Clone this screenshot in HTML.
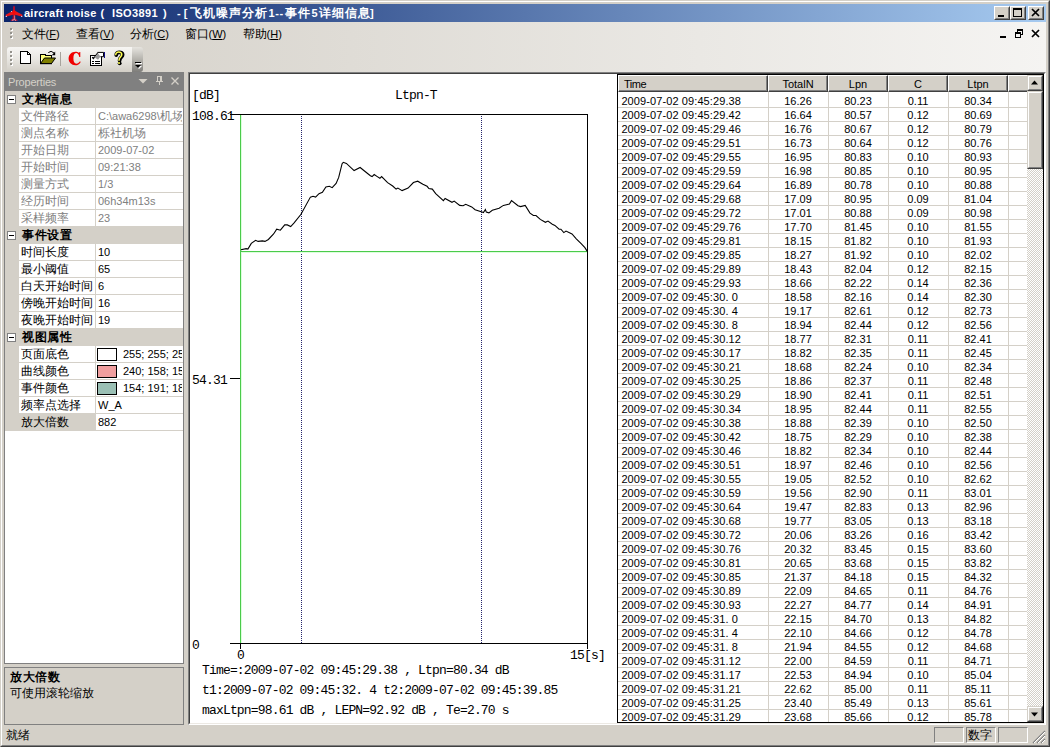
<!DOCTYPE html>
<html><head><meta charset="utf-8"><title>aircraft noise</title>
<style>
html,body{margin:0;padding:0;}
body{width:1050px;height:747px;overflow:hidden;background:#d4d0c8;position:relative;font-family:"Liberation Sans",sans-serif;font-size:11px;color:#000;}
.a{position:absolute;white-space:nowrap;overflow:hidden;}
.t{position:absolute;white-space:nowrap;line-height:14px;height:14px;}
.cj{font-size:12px;}
.j{display:inline-block;text-align:justify;text-align-last:justify;text-justify:inter-character;white-space:nowrap;letter-spacing:0;}
.mono{font-family:"Liberation Mono",monospace;font-size:13px;letter-spacing:-0.83px;position:absolute;white-space:nowrap;line-height:14px;height:14px;}
.row{position:absolute;left:618px;width:409px;height:14px;line-height:14px;white-space:nowrap;font-size:11px;}
.row span{position:absolute;top:0;height:14px;text-align:center;width:60px;}
.row span.tm{left:3.400px;width:146px;text-align:left;letter-spacing:0.1px;}
.pr{position:absolute;left:5px;width:178px;height:17px;}
.pr .n{position:absolute;left:16px;top:0;width:73px;height:16px;line-height:16px;font-size:12px;overflow:hidden;white-space:nowrap;}
.pr .v{position:absolute;left:92px;top:0;width:85px;height:16px;line-height:16px;font-size:11px;overflow:hidden;white-space:nowrap;}
.cat{position:absolute;left:5px;width:178px;height:17px;background:#d4d0c8;}
.cat b{position:absolute;left:17px;top:0;line-height:16px;font-size:12px;}
.pm{position:absolute;left:2px;top:4px;width:7px;height:7px;border:1px solid #808080;background:#fff;}
.pm i{position:absolute;left:1px;top:3px;width:5px;height:1px;background:#000;}
.hd{position:absolute;top:75px;height:17px;box-sizing:border-box;background:#d4d0c8;border-left:1px solid #fff;border-top:1px solid #fff;border-right:1px solid #404040;border-bottom:1px solid #404040;}
.hd i{position:absolute;left:0;top:0;right:0;bottom:0;border-right:1px solid #808080;border-bottom:1px solid #808080;}
.hd span{position:absolute;left:0;right:0;top:1px;line-height:14px;text-align:center;font-size:11px;}
.sp{position:absolute;box-sizing:border-box;border:1px solid;border-color:#808080 #fff #fff #808080;}
.btn{position:absolute;box-sizing:border-box;background:#d4d0c8;border:1px solid;border-color:#fff #404040 #404040 #fff;}
.sb{position:absolute;box-sizing:border-box;background:#d4d0c8;border:1px solid;border-color:#d4d0c8 #404040 #404040 #d4d0c8;}
.sb i{position:absolute;left:0;top:0;right:0;bottom:0;border:1px solid;border-color:#fff #808080 #808080 #fff;}
.btn i{position:absolute;left:0;top:0;right:0;bottom:0;border:1px solid;border-color:#d4d0c8 #808080 #808080 #d4d0c8;}
</style></head><body>

<div class="a" style="left:0;top:0;width:1050px;height:747px;box-sizing:border-box;border:1px solid;border-color:#d4d0c8 #404040 #404040 #d4d0c8;"></div>
<div class="a" style="left:1px;top:1px;width:1048px;height:745px;box-sizing:border-box;border:1px solid;border-color:#fff #808080 #808080 #fff;"></div>
<div class="a" style="left:4px;top:4px;width:1042px;height:18px;background:linear-gradient(to right,#0a246a,#a6caf0);"></div>
<svg class="a" style="left:5px;top:5px" width="18" height="17" viewBox="5 5 18 17"><path d="M13 7Q14 4.500 15 7L15.400 19.500H12.600Z" fill="#a81030"/><path d="M14 10.300L22.400 14.800V16.800L14 14.600L5.700 16.800V14.800Z" fill="#ea1418"/><path d="M14 10.600V14.500" stroke="#f80808" stroke-width="2.400"/><path d="M14 17.800L17.400 20V21.100L14 20.400L10.800 21.100V20Z" fill="#b81838"/><path d="M12 20.300L14.500 19.600L16 20.600" stroke="#f4b8c8" stroke-width="0.800" fill="none"/><path d="M14.600 15.500V19" stroke="#d8a0b8" stroke-width="0.700"/><circle cx="6.300" cy="16.400" r="0.650" fill="#dcdcff"/><circle cx="21.700" cy="16.400" r="0.650" fill="#dcdcff"/><circle cx="11.500" cy="11.500" r="0.600" fill="#f0d0e0"/></svg>
<div class="t" style="left:24px;top:6px;color:#fff;font-weight:bold;font-size:11px;letter-spacing:0.25px;">aircraft noise</div>
<div class="t" style="left:100.5px;top:6px;color:#fff;font-weight:bold;font-size:11px;letter-spacing:0px;">(</div>
<div class="t" style="left:112px;top:6px;color:#fff;font-weight:bold;font-size:11px;letter-spacing:0.35px;">ISO3891</div>
<div class="t" style="left:163px;top:6px;color:#fff;font-weight:bold;font-size:11px;letter-spacing:0px;">)</div>
<div class="t" style="left:177px;top:6px;color:#fff;font-weight:bold;font-size:11px;letter-spacing:0px;">- [</div>
<div class="t" style="left:190px;top:6px;color:#fff;font-weight:bold;font-size:11px;letter-spacing:0px;"><span class="cj j" style="width:77px;">飞机噪声分析</span></div>
<div class="t" style="left:268.5px;top:6px;color:#fff;font-weight:bold;font-size:11px;letter-spacing:0.6px;">1--</div>
<div class="t" style="left:285px;top:6px;color:#fff;font-weight:bold;font-size:11px;letter-spacing:0px;"><span class="cj j" style="width:25px;">事件</span></div>
<div class="t" style="left:311.5px;top:6px;color:#fff;font-weight:bold;font-size:11px;letter-spacing:0px;">5</div>
<div class="t" style="left:318.5px;top:6px;color:#fff;font-weight:bold;font-size:11px;letter-spacing:0px;"><span class="cj j" style="width:51px;">详细信息</span></div>
<div class="t" style="left:370px;top:6px;color:#fff;font-weight:bold;font-size:11px;letter-spacing:0px;">]</div>
<div class="btn" style="left:994px;top:6px;width:16px;height:14px;"><i></i></div>
<div class="btn" style="left:1010px;top:6px;width:16px;height:14px;"><i></i></div>
<div class="btn" style="left:1028px;top:6px;width:16px;height:14px;"><i></i></div>
<div class="a" style="left:998px;top:15px;width:6px;height:2px;background:#000;"></div>
<div class="a" style="left:1013px;top:8px;width:9px;height:9px;box-sizing:border-box;border:1px solid #000;border-top-width:2px;"></div>
<svg class="a" style="left:1031px;top:8px" width="10" height="9" viewBox="0 0 10 9"><path d="M1 1l7 7M8 1l-7 7" stroke="#000" stroke-width="1.7" fill="none"/></svg>
<div class="a" style="left:4px;top:22px;width:1042px;height:50px;background:linear-gradient(to right,#d4d0c8,#f5f4f2);"></div>
<div class="a" style="left:11px;top:29px;width:2px;height:2px;background:#fff;"></div><div class="a" style="left:10px;top:28px;width:2px;height:2px;background:#94928c;"></div>
<div class="a" style="left:11px;top:33px;width:2px;height:2px;background:#fff;"></div><div class="a" style="left:10px;top:32px;width:2px;height:2px;background:#94928c;"></div>
<div class="a" style="left:11px;top:37px;width:2px;height:2px;background:#fff;"></div><div class="a" style="left:10px;top:36px;width:2px;height:2px;background:#94928c;"></div>
<div class="t" style="left:21.5px;top:27px;font-size:11px;"><span class="cj j" style="width:24px;">文件</span>(<u>F</u>)</div>
<div class="t" style="left:75.5px;top:27px;font-size:11px;"><span class="cj j" style="width:24px;">查看</span>(<u>V</u>)</div>
<div class="t" style="left:129.5px;top:27px;font-size:11px;"><span class="cj j" style="width:24px;">分析</span>(<u>C</u>)</div>
<div class="t" style="left:184.5px;top:27px;font-size:11px;"><span class="cj j" style="width:24px;">窗口</span>(<u>W</u>)</div>
<div class="t" style="left:242.5px;top:27px;font-size:11px;"><span class="cj j" style="width:24px;">帮助</span>(<u>H</u>)</div>
<div class="a" style="left:1000px;top:36px;width:6px;height:2px;background:#000;"></div>
<div class="a" style="left:1017px;top:29px;width:6px;height:6px;box-sizing:border-box;border:1px solid #000;border-top-width:2px;"></div>
<div class="a" style="left:1015px;top:32px;width:6px;height:6px;box-sizing:border-box;border:1px solid #000;border-top-width:2px;background:#f4f3f1;"></div>
<svg class="a" style="left:1031px;top:29px" width="10" height="9" viewBox="0 0 10 9"><path d="M1 1l7 7M8 1l-7 7" stroke="#000" stroke-width="1.7" fill="none"/></svg>
<div class="a" style="left:7px;top:47px;width:125px;height:25px;border-radius:3px 0 0 3px;background:linear-gradient(to bottom,#f7f6f4,#e8e6e1 50%,#d2cec6);"></div>
<div class="a" style="left:132px;top:47px;width:11px;height:25px;border-radius:0 3px 3px 0;background:linear-gradient(to bottom,#e6e4df,#b4b2ac 50%,#7e7d7a);"></div>
<div class="a" style="left:11px;top:52px;width:2px;height:2px;background:#fff;"></div><div class="a" style="left:10px;top:51px;width:2px;height:2px;background:#94928c;"></div>
<div class="a" style="left:11px;top:56px;width:2px;height:2px;background:#fff;"></div><div class="a" style="left:10px;top:55px;width:2px;height:2px;background:#94928c;"></div>
<div class="a" style="left:11px;top:60px;width:2px;height:2px;background:#fff;"></div><div class="a" style="left:10px;top:59px;width:2px;height:2px;background:#94928c;"></div>
<div class="a" style="left:11px;top:64px;width:2px;height:2px;background:#fff;"></div><div class="a" style="left:10px;top:63px;width:2px;height:2px;background:#94928c;"></div>
<svg class="a" style="left:14px;top:47px" width="130" height="25" viewBox="14 47 130 25">
<g shape-rendering="crispEdges">
<path d="M20.500 51.500H27.500L30.500 54.500V63.500H20.500Z" fill="#fff" stroke="#000" stroke-width="1"/>
<path d="M27.500 51.500V54.500H30.500" fill="none" stroke="#000" stroke-width="1"/>
<path d="M20 63.500H31" stroke="#000" stroke-width="1"/>
</g>
<g>
<path d="M40.500 63.500V55L41.500 54H44.500L45.500 55H51.500V57.500" fill="#ffff7a" stroke="#000" stroke-width="1" shape-rendering="crispEdges"/>
<path d="M41 57.500V63" stroke="#ffffc8" stroke-width="1" shape-rendering="crispEdges"/>
<path d="M40.500 63.500L44.500 58H55.500L51.500 63.500Z" fill="#808000" stroke="#000" stroke-width="1"/>
<path d="M40 63.600H52" stroke="#000" stroke-width="1.2"/>
<path d="M48.300 52.600Q51 49.800 54 53" fill="none" stroke="#000" stroke-width="1"/>
<path d="M55.200 51.600V55.200H51.800Z" fill="#000"/>
</g>
<path d="M60.500 52V66" stroke="#a6a39c" stroke-width="1" shape-rendering="crispEdges"/>
<path d="M80.300 52L80.300 56.900L79.300 56.900C78.800 54.500 77.600 53.100 76.100 53.100C74.200 53.100 73.400 55.400 73.400 58.500C73.400 61.900 74.400 63.700 76.400 63.700C77.800 63.700 79 62.900 80 61.300L80.700 61.900C79.500 64.100 77.700 65.300 75.300 65.300C71.500 65.300 68.600 62.500 68.600 58.600C68.600 54.700 71.600 51.800 75.400 51.800C76.800 51.800 77.800 52.200 78.700 52.800C79.200 52.800 79.500 52.500 79.600 52Z" fill="#f00000"/>
<g>
<path d="M90.500 55.500H101.500V65.500H90.500Z" fill="#fff" stroke="#000" stroke-width="1" shape-rendering="crispEdges"/>
<path d="M92 61.500H94M95 61.500H100M92 63.500H94M95 63.500H100" stroke="#000" stroke-width="1" shape-rendering="crispEdges"/>
<path d="M92.300 57.200L93.300 58.400L94.600 57" stroke="#000" stroke-width="1.300" fill="none"/>
<path d="M94.200 57L98 52.300L101.200 55.500L98 59.800Z" fill="#9a9a9a"/>
<path d="M94.600 56.600L98 52.400" stroke="#000" stroke-width="1"/>
<path d="M97.500 52.400H103.500V56.700H100.500" fill="#fff" stroke="#000" stroke-width="1"/>
<path d="M104.500 51.800V57.800" stroke="#101088" stroke-width="1.400" shape-rendering="crispEdges"/>
</g>
<g fill="none" stroke-linecap="round">
<path d="M116.300 55C116 51.600 122.700 51.400 122.600 54.800C122.500 57.200 119.600 57.400 119.600 60.400" stroke="#000" stroke-width="3.800"/>
<circle cx="119.700" cy="63.300" r="1.900" fill="#000" stroke="none"/>
<path d="M115.800 54.600C115.600 51.400 121.800 51.200 121.800 54.500C121.800 57 119 57.200 119 60.200" stroke="#ffff50" stroke-width="1.500"/>
<circle cx="119" cy="63" r="1" fill="#ffff50" stroke="none"/>
</g>
<g shape-rendering="crispEdges">
<path d="M136 63.500H142" stroke="#fff" stroke-width="1"/>
<path d="M135 62.500H141" stroke="#000" stroke-width="1"/>
<path d="M136 66H142L139 69Z" fill="#fff" shape-rendering="auto"/>
<path d="M135 65H141L138 68Z" fill="#000" shape-rendering="auto"/>
</g>
</svg>
<div class="a" style="left:4px;top:72px;width:180px;height:19px;background:#808080;"></div>
<div class="t" style="left:8px;top:75px;color:#d4d0c8;font-size:11px;letter-spacing:-0.2px;">Properties</div>
<svg class="a" style="left:138px;top:74px" width="44" height="14" viewBox="0 0 44 14"><path d="M0.500 5h9l-4.500 4.500z" fill="#d4d0c8"/><path d="M19.5 2.5h4v5h-4zM22.500 2.5v5M18 7.500h7M21.500 8v3" stroke="#d4d0c8" fill="none" shape-rendering="crispEdges"/><path d="M33.500 3.500l7 7M40.500 3.500l-7 7" stroke="#d4d0c8" stroke-width="1.3" fill="none"/></svg>
<div class="a" style="left:4px;top:91px;width:180px;height:573px;box-sizing:border-box;background:#fff;border:1px solid #808080;border-top:none;"></div>
<div class="a" style="left:5px;top:91px;width:14px;height:340px;background:#d4d0c8;"></div>
<div class="cat" style="top:91px;"><div class="pm"><i></i></div><b><span class="cj j" style="width:50px;">文档信息</span></b></div>
<div class="pr" style="top:108px;color:#808080;"><div class="a" style="left:14px;top:0;width:76px;height:16px;"></div><div class="n" style=""><span class="cj j" style="width:48px;">文件路径</span></div><div class="a" style="left:90px;top:0;width:1px;height:17px;background:#d4d0c8;"></div><div class="v"><span style="position:absolute;left:1px;">C:\awa6298\<span class="cj j" style="width:24px;">机场</span></span></div><div class="a" style="left:14px;top:16px;width:164px;height:1px;background:#d4d0c8;"></div></div>
<div class="pr" style="top:125px;color:#808080;"><div class="a" style="left:14px;top:0;width:76px;height:16px;"></div><div class="n" style=""><span class="cj j" style="width:48px;">测点名称</span></div><div class="a" style="left:90px;top:0;width:1px;height:17px;background:#d4d0c8;"></div><div class="v"><span style="position:absolute;left:1px;"><span class="cj j" style="width:48px;">栎社机场</span></span></div><div class="a" style="left:14px;top:16px;width:164px;height:1px;background:#d4d0c8;"></div></div>
<div class="pr" style="top:142px;color:#808080;"><div class="a" style="left:14px;top:0;width:76px;height:16px;"></div><div class="n" style=""><span class="cj j" style="width:48px;">开始日期</span></div><div class="a" style="left:90px;top:0;width:1px;height:17px;background:#d4d0c8;"></div><div class="v"><span style="position:absolute;left:1px;">2009-07-02</span></div><div class="a" style="left:14px;top:16px;width:164px;height:1px;background:#d4d0c8;"></div></div>
<div class="pr" style="top:159px;color:#808080;"><div class="a" style="left:14px;top:0;width:76px;height:16px;"></div><div class="n" style=""><span class="cj j" style="width:48px;">开始时间</span></div><div class="a" style="left:90px;top:0;width:1px;height:17px;background:#d4d0c8;"></div><div class="v"><span style="position:absolute;left:1px;">09:21:38</span></div><div class="a" style="left:14px;top:16px;width:164px;height:1px;background:#d4d0c8;"></div></div>
<div class="pr" style="top:176px;color:#808080;"><div class="a" style="left:14px;top:0;width:76px;height:16px;"></div><div class="n" style=""><span class="cj j" style="width:48px;">测量方式</span></div><div class="a" style="left:90px;top:0;width:1px;height:17px;background:#d4d0c8;"></div><div class="v"><span style="position:absolute;left:1px;">1/3</span></div><div class="a" style="left:14px;top:16px;width:164px;height:1px;background:#d4d0c8;"></div></div>
<div class="pr" style="top:193px;color:#808080;"><div class="a" style="left:14px;top:0;width:76px;height:16px;"></div><div class="n" style=""><span class="cj j" style="width:48px;">经历时间</span></div><div class="a" style="left:90px;top:0;width:1px;height:17px;background:#d4d0c8;"></div><div class="v"><span style="position:absolute;left:1px;">06h34m13s</span></div><div class="a" style="left:14px;top:16px;width:164px;height:1px;background:#d4d0c8;"></div></div>
<div class="pr" style="top:210px;color:#808080;"><div class="a" style="left:14px;top:0;width:76px;height:16px;"></div><div class="n" style=""><span class="cj j" style="width:48px;">采样频率</span></div><div class="a" style="left:90px;top:0;width:1px;height:17px;background:#d4d0c8;"></div><div class="v"><span style="position:absolute;left:1px;">23</span></div><div class="a" style="left:14px;top:16px;width:164px;height:1px;background:#d4d0c8;"></div></div>
<div class="cat" style="top:227px;"><div class="pm"><i></i></div><b><span class="cj j" style="width:50px;">事件设置</span></b></div>
<div class="pr" style="top:244px;color:#000;"><div class="a" style="left:14px;top:0;width:76px;height:16px;"></div><div class="n" style=""><span class="cj j" style="width:48px;">时间长度</span></div><div class="a" style="left:90px;top:0;width:1px;height:17px;background:#d4d0c8;"></div><div class="v"><span style="position:absolute;left:1px;">10</span></div><div class="a" style="left:14px;top:16px;width:164px;height:1px;background:#d4d0c8;"></div></div>
<div class="pr" style="top:261px;color:#000;"><div class="a" style="left:14px;top:0;width:76px;height:16px;"></div><div class="n" style=""><span class="cj j" style="width:48px;">最小阈值</span></div><div class="a" style="left:90px;top:0;width:1px;height:17px;background:#d4d0c8;"></div><div class="v"><span style="position:absolute;left:1px;">65</span></div><div class="a" style="left:14px;top:16px;width:164px;height:1px;background:#d4d0c8;"></div></div>
<div class="pr" style="top:278px;color:#000;"><div class="a" style="left:14px;top:0;width:76px;height:16px;"></div><div class="n" style=""><span class="cj j" style="width:72px;">白天开始时间</span></div><div class="a" style="left:90px;top:0;width:1px;height:17px;background:#d4d0c8;"></div><div class="v"><span style="position:absolute;left:1px;">6</span></div><div class="a" style="left:14px;top:16px;width:164px;height:1px;background:#d4d0c8;"></div></div>
<div class="pr" style="top:295px;color:#000;"><div class="a" style="left:14px;top:0;width:76px;height:16px;"></div><div class="n" style=""><span class="cj j" style="width:72px;">傍晚开始时间</span></div><div class="a" style="left:90px;top:0;width:1px;height:17px;background:#d4d0c8;"></div><div class="v"><span style="position:absolute;left:1px;">16</span></div><div class="a" style="left:14px;top:16px;width:164px;height:1px;background:#d4d0c8;"></div></div>
<div class="pr" style="top:312px;color:#000;"><div class="a" style="left:14px;top:0;width:76px;height:16px;"></div><div class="n" style=""><span class="cj j" style="width:72px;">夜晚开始时间</span></div><div class="a" style="left:90px;top:0;width:1px;height:17px;background:#d4d0c8;"></div><div class="v"><span style="position:absolute;left:1px;">19</span></div><div class="a" style="left:14px;top:16px;width:164px;height:1px;background:#d4d0c8;"></div></div>
<div class="cat" style="top:329px;"><div class="pm"><i></i></div><b><span class="cj j" style="width:50px;">视图属性</span></b></div>
<div class="pr" style="top:346px;color:#000;"><div class="a" style="left:14px;top:0;width:76px;height:16px;"></div><div class="n" style=""><span class="cj j" style="width:48px;">页面底色</span></div><div class="a" style="left:90px;top:0;width:1px;height:17px;background:#d4d0c8;"></div><div class="v"><div style="position:absolute;left:0px;top:2px;width:18px;height:11px;border:1px solid #000;background:#ffffff;"></div><span style="position:absolute;left:26px;">255; 255; 255</span></div><div class="a" style="left:14px;top:16px;width:164px;height:1px;background:#d4d0c8;"></div></div>
<div class="pr" style="top:363px;color:#000;"><div class="a" style="left:14px;top:0;width:76px;height:16px;"></div><div class="n" style=""><span class="cj j" style="width:48px;">曲线颜色</span></div><div class="a" style="left:90px;top:0;width:1px;height:17px;background:#d4d0c8;"></div><div class="v"><div style="position:absolute;left:0px;top:2px;width:18px;height:11px;border:1px solid #000;background:#f09e9e;"></div><span style="position:absolute;left:26px;">240; 158; 158</span></div><div class="a" style="left:14px;top:16px;width:164px;height:1px;background:#d4d0c8;"></div></div>
<div class="pr" style="top:380px;color:#000;"><div class="a" style="left:14px;top:0;width:76px;height:16px;"></div><div class="n" style=""><span class="cj j" style="width:48px;">事件颜色</span></div><div class="a" style="left:90px;top:0;width:1px;height:17px;background:#d4d0c8;"></div><div class="v"><div style="position:absolute;left:0px;top:2px;width:18px;height:11px;border:1px solid #000;background:#9abfb4;"></div><span style="position:absolute;left:26px;">154; 191; 180</span></div><div class="a" style="left:14px;top:16px;width:164px;height:1px;background:#d4d0c8;"></div></div>
<div class="pr" style="top:397px;color:#000;"><div class="a" style="left:14px;top:0;width:76px;height:16px;"></div><div class="n" style=""><span class="cj j" style="width:60px;">频率点选择</span></div><div class="a" style="left:90px;top:0;width:1px;height:17px;background:#d4d0c8;"></div><div class="v"><span style="position:absolute;left:1px;">W_A</span></div><div class="a" style="left:14px;top:16px;width:164px;height:1px;background:#d4d0c8;"></div></div>
<div class="pr" style="top:414px;color:#000;"><div class="a" style="left:14px;top:0;width:76px;height:16px;background:#d4d0c8;"></div><div class="n" style=""><span class="cj j" style="width:48px;">放大倍数</span></div><div class="a" style="left:90px;top:0;width:1px;height:17px;background:#d4d0c8;"></div><div class="v"><span style="position:absolute;left:1px;">882</span></div><div class="a" style="left:14px;top:16px;width:164px;height:1px;background:#d4d0c8;"></div></div>
<div class="a" style="left:4px;top:667px;width:180px;height:58px;box-sizing:border-box;border:1px solid #808080;"></div>
<div class="t" style="left:10px;top:670px;font-weight:bold;"><span class="cj j" style="width:50px;">放大倍数</span></div>
<div class="t" style="left:10px;top:686px;"><span class="cj j" style="width:84px;">可使用滚轮缩放</span></div>
<div class="t" style="left:6px;top:728px;"><span class="cj j" style="width:24px;">就绪</span></div>
<div class="sp" style="left:934px;top:727px;width:30px;height:16px;"></div>
<div class="sp" style="left:966px;top:727px;width:30px;height:16px;"></div>
<div class="sp" style="left:998px;top:727px;width:30px;height:16px;"></div>
<div class="t" style="left:968px;top:728px;"><span class="cj j" style="width:24px;">数字</span></div>
<svg class="a" style="left:1032px;top:730px" width="14" height="14" viewBox="0 0 14 14"><path d="M13 1L1 13M13 5L5 13M13 9L9 13" stroke="#808080" stroke-width="1.4"/><path d="M13 2L2 13M13 6L6 13M13 10L10 13" stroke="#fff" stroke-width="1"/></svg>
<div class="a" style="left:188px;top:72px;width:858px;height:653px;box-sizing:border-box;border:1px solid;border-color:#808080 #fff #fff #808080;"></div>
<div class="a" style="left:189px;top:73px;width:856px;height:651px;box-sizing:border-box;border:1px solid;border-color:#404040 #fff #ece9e4 #404040;background:#fff;"></div>
<svg class="a" style="left:190px;top:74px" width="427" height="649" viewBox="190 74 427 649" shape-rendering="crispEdges">
<path d="M230 114.500H588M587.500 114V649M230 643.500H588M230 378.500H240M240.500 643V649" stroke="#000" stroke-width="1" fill="none"/>
<path d="M301.500 116V643M481.500 116V643" stroke="#24246a" stroke-width="1" stroke-dasharray="1 1" fill="none"/>
<path d="M241.500 115V643M241 252.500H587" stroke="#dcffdc" stroke-width="1" fill="none"/>
<path d="M240.500 115V643M240 251.500H587" stroke="#4bca4b" stroke-width="1" fill="none"/>
<polyline shape-rendering="auto" points="241.0,249.8 246.1,248.6 247.9,249.1 251.3,243.4 255.6,240.3 258.1,241.4 262.4,240.9 265.0,241.4 268.4,239.5 273.6,234.0 276.7,229.2 280.4,230.2 284.7,224.9 287.3,224.9 290.7,226.6 294.1,222.9 301.0,214.3 310.4,197.1 313.0,196.3 315.6,197.1 319.0,193.7 322.4,192.3 325.9,186.9 329.3,186.3 332.2,187.7 336.1,183.4 338.7,177.4 342.1,163.7 343.3,162.3 346.4,163.4 354.1,170.6 360.1,167.5 370.4,175.7 372.1,176.6 374.2,174.5 377.3,176.6 379.9,178.3 381.6,176.6 387.6,182.6 392.7,186.0 396.1,189.1 397.9,188.1 402.1,190.6 408.1,188.1 413.4,182.6 417.7,181.2 422.9,184.3 427.1,186.3 428.9,188.6 432.3,189.1 435.7,193.7 443.4,200.6 445.1,198.5 452.0,202.3 454.2,201.1 459.7,205.4 463.1,205.7 465.7,204.3 471.7,206.9 475.1,209.7 482.0,212.1 483.4,212.6 485.4,209.5 486.3,212.1 488.9,212.9 492.3,210.3 499.1,208.3 503.4,205.4 509.4,204.0 511.5,200.6 518.0,205.7 520.6,206.6 525.2,205.4 530.0,213.1 533.4,215.5 536.0,215.5 540.3,219.4 545.4,222.3 548.0,221.1 552.3,224.2 554.9,225.4 559.1,229.2 560.9,229.2 563.8,232.6 566.0,231.1 572.0,234.0 576.3,238.8 581.4,243.9 584.9,247.7 587.1,251.1" stroke="#000" stroke-width="1.1" fill="none"/>
</svg>
<div class="mono" style="left:192px;top:89px;">[dB]</div>
<div class="mono" style="left:395px;top:89px;">Ltpn-T</div>
<div class="mono" style="left:192px;top:110px;">108.61</div>
<div class="mono" style="left:192px;top:374px;">54.31</div>
<div class="mono" style="left:192px;top:639px;">0</div>
<div class="mono" style="left:237px;top:649px;">0</div>
<div class="mono" style="left:570px;top:649px;">15[s]</div>
<div class="mono" style="left:202px;top:664px;">Time=:2009-07-02 09:45:29.38 , Ltpn=80.34 dB</div>
<div class="mono" style="left:202px;top:684px;">t1:2009-07-02 09:45:32. 4 t2:2009-07-02 09:45:39.85</div>
<div class="mono" style="left:202px;top:704px;">maxLtpn=98.61 dB , LEPN=92.92 dB , Te=2.70 s</div>
<div class="a" style="left:617px;top:74px;width:427px;height:649px;box-sizing:border-box;border:1px solid #000;background:#fff;"></div>
<svg class="a" style="left:618px;top:92px" width="409" height="630" viewBox="618 92 409 630" shape-rendering="crispEdges"><path d="M618 107.5H1027M618 121.5H1027M618 135.5H1027M618 149.5H1027M618 163.5H1027M618 177.5H1027M618 191.5H1027M618 205.5H1027M618 219.5H1027M618 233.5H1027M618 247.5H1027M618 261.5H1027M618 275.5H1027M618 289.5H1027M618 303.5H1027M618 317.5H1027M618 331.5H1027M618 345.5H1027M618 359.5H1027M618 373.5H1027M618 387.5H1027M618 401.5H1027M618 415.5H1027M618 429.5H1027M618 443.5H1027M618 457.5H1027M618 471.5H1027M618 485.5H1027M618 499.5H1027M618 513.5H1027M618 527.5H1027M618 541.5H1027M618 555.5H1027M618 569.5H1027M618 583.5H1027M618 597.5H1027M618 611.5H1027M618 625.5H1027M618 639.5H1027M618 653.5H1027M618 667.5H1027M618 681.5H1027M618 695.5H1027M618 709.5H1027M768.5 92V722M828.5 92V722M888.5 92V722M948.5 92V722M1008.5 92V722" stroke="#d4d0c8" stroke-width="1" fill="none"/></svg>
<div class="hd" style="left:618px;width:150px;"><i></i><span style="text-align:left;left:5px;letter-spacing:-0.5px;">Time</span></div>
<div class="hd" style="left:768px;width:60px;"><i></i><span>TotalN</span></div>
<div class="hd" style="left:828px;width:60px;"><i></i><span>Lpn</span></div>
<div class="hd" style="left:888px;width:60px;"><i></i><span>C</span></div>
<div class="hd" style="left:948px;width:60px;"><i></i><span>Ltpn</span></div>
<div class="hd" style="left:1008px;width:24px;"><i></i><span></span></div>
<div class="row" style="top:94px;height:14px;overflow:hidden;"><span class="tm">2009-07-02 09:45:29.38</span><span style="left:150px">16.26</span><span style="left:210px">80.23</span><span style="left:270px">0.11</span><span style="left:330px">80.34</span></div>
<div class="row" style="top:108px;height:14px;overflow:hidden;"><span class="tm">2009-07-02 09:45:29.42</span><span style="left:150px">16.64</span><span style="left:210px">80.57</span><span style="left:270px">0.12</span><span style="left:330px">80.69</span></div>
<div class="row" style="top:122px;height:14px;overflow:hidden;"><span class="tm">2009-07-02 09:45:29.46</span><span style="left:150px">16.76</span><span style="left:210px">80.67</span><span style="left:270px">0.12</span><span style="left:330px">80.79</span></div>
<div class="row" style="top:136px;height:14px;overflow:hidden;"><span class="tm">2009-07-02 09:45:29.51</span><span style="left:150px">16.73</span><span style="left:210px">80.64</span><span style="left:270px">0.12</span><span style="left:330px">80.76</span></div>
<div class="row" style="top:150px;height:14px;overflow:hidden;"><span class="tm">2009-07-02 09:45:29.55</span><span style="left:150px">16.95</span><span style="left:210px">80.83</span><span style="left:270px">0.10</span><span style="left:330px">80.93</span></div>
<div class="row" style="top:164px;height:14px;overflow:hidden;"><span class="tm">2009-07-02 09:45:29.59</span><span style="left:150px">16.98</span><span style="left:210px">80.85</span><span style="left:270px">0.10</span><span style="left:330px">80.95</span></div>
<div class="row" style="top:178px;height:14px;overflow:hidden;"><span class="tm">2009-07-02 09:45:29.64</span><span style="left:150px">16.89</span><span style="left:210px">80.78</span><span style="left:270px">0.10</span><span style="left:330px">80.88</span></div>
<div class="row" style="top:192px;height:14px;overflow:hidden;"><span class="tm">2009-07-02 09:45:29.68</span><span style="left:150px">17.09</span><span style="left:210px">80.95</span><span style="left:270px">0.09</span><span style="left:330px">81.04</span></div>
<div class="row" style="top:206px;height:14px;overflow:hidden;"><span class="tm">2009-07-02 09:45:29.72</span><span style="left:150px">17.01</span><span style="left:210px">80.88</span><span style="left:270px">0.09</span><span style="left:330px">80.98</span></div>
<div class="row" style="top:220px;height:14px;overflow:hidden;"><span class="tm">2009-07-02 09:45:29.76</span><span style="left:150px">17.70</span><span style="left:210px">81.45</span><span style="left:270px">0.10</span><span style="left:330px">81.55</span></div>
<div class="row" style="top:234px;height:14px;overflow:hidden;"><span class="tm">2009-07-02 09:45:29.81</span><span style="left:150px">18.15</span><span style="left:210px">81.82</span><span style="left:270px">0.10</span><span style="left:330px">81.93</span></div>
<div class="row" style="top:248px;height:14px;overflow:hidden;"><span class="tm">2009-07-02 09:45:29.85</span><span style="left:150px">18.27</span><span style="left:210px">81.92</span><span style="left:270px">0.10</span><span style="left:330px">82.02</span></div>
<div class="row" style="top:262px;height:14px;overflow:hidden;"><span class="tm">2009-07-02 09:45:29.89</span><span style="left:150px">18.43</span><span style="left:210px">82.04</span><span style="left:270px">0.12</span><span style="left:330px">82.15</span></div>
<div class="row" style="top:276px;height:14px;overflow:hidden;"><span class="tm">2009-07-02 09:45:29.93</span><span style="left:150px">18.66</span><span style="left:210px">82.22</span><span style="left:270px">0.14</span><span style="left:330px">82.36</span></div>
<div class="row" style="top:290px;height:14px;overflow:hidden;"><span class="tm">2009-07-02 09:45:30.&nbsp;0</span><span style="left:150px">18.58</span><span style="left:210px">82.16</span><span style="left:270px">0.14</span><span style="left:330px">82.30</span></div>
<div class="row" style="top:304px;height:14px;overflow:hidden;"><span class="tm">2009-07-02 09:45:30.&nbsp;4</span><span style="left:150px">19.17</span><span style="left:210px">82.61</span><span style="left:270px">0.12</span><span style="left:330px">82.73</span></div>
<div class="row" style="top:318px;height:14px;overflow:hidden;"><span class="tm">2009-07-02 09:45:30.&nbsp;8</span><span style="left:150px">18.94</span><span style="left:210px">82.44</span><span style="left:270px">0.12</span><span style="left:330px">82.56</span></div>
<div class="row" style="top:332px;height:14px;overflow:hidden;"><span class="tm">2009-07-02 09:45:30.12</span><span style="left:150px">18.77</span><span style="left:210px">82.31</span><span style="left:270px">0.11</span><span style="left:330px">82.41</span></div>
<div class="row" style="top:346px;height:14px;overflow:hidden;"><span class="tm">2009-07-02 09:45:30.17</span><span style="left:150px">18.82</span><span style="left:210px">82.35</span><span style="left:270px">0.11</span><span style="left:330px">82.45</span></div>
<div class="row" style="top:360px;height:14px;overflow:hidden;"><span class="tm">2009-07-02 09:45:30.21</span><span style="left:150px">18.68</span><span style="left:210px">82.24</span><span style="left:270px">0.10</span><span style="left:330px">82.34</span></div>
<div class="row" style="top:374px;height:14px;overflow:hidden;"><span class="tm">2009-07-02 09:45:30.25</span><span style="left:150px">18.86</span><span style="left:210px">82.37</span><span style="left:270px">0.11</span><span style="left:330px">82.48</span></div>
<div class="row" style="top:388px;height:14px;overflow:hidden;"><span class="tm">2009-07-02 09:45:30.29</span><span style="left:150px">18.90</span><span style="left:210px">82.41</span><span style="left:270px">0.11</span><span style="left:330px">82.51</span></div>
<div class="row" style="top:402px;height:14px;overflow:hidden;"><span class="tm">2009-07-02 09:45:30.34</span><span style="left:150px">18.95</span><span style="left:210px">82.44</span><span style="left:270px">0.11</span><span style="left:330px">82.55</span></div>
<div class="row" style="top:416px;height:14px;overflow:hidden;"><span class="tm">2009-07-02 09:45:30.38</span><span style="left:150px">18.88</span><span style="left:210px">82.39</span><span style="left:270px">0.10</span><span style="left:330px">82.50</span></div>
<div class="row" style="top:430px;height:14px;overflow:hidden;"><span class="tm">2009-07-02 09:45:30.42</span><span style="left:150px">18.75</span><span style="left:210px">82.29</span><span style="left:270px">0.10</span><span style="left:330px">82.38</span></div>
<div class="row" style="top:444px;height:14px;overflow:hidden;"><span class="tm">2009-07-02 09:45:30.46</span><span style="left:150px">18.82</span><span style="left:210px">82.34</span><span style="left:270px">0.10</span><span style="left:330px">82.44</span></div>
<div class="row" style="top:458px;height:14px;overflow:hidden;"><span class="tm">2009-07-02 09:45:30.51</span><span style="left:150px">18.97</span><span style="left:210px">82.46</span><span style="left:270px">0.10</span><span style="left:330px">82.56</span></div>
<div class="row" style="top:472px;height:14px;overflow:hidden;"><span class="tm">2009-07-02 09:45:30.55</span><span style="left:150px">19.05</span><span style="left:210px">82.52</span><span style="left:270px">0.10</span><span style="left:330px">82.62</span></div>
<div class="row" style="top:486px;height:14px;overflow:hidden;"><span class="tm">2009-07-02 09:45:30.59</span><span style="left:150px">19.56</span><span style="left:210px">82.90</span><span style="left:270px">0.11</span><span style="left:330px">83.01</span></div>
<div class="row" style="top:500px;height:14px;overflow:hidden;"><span class="tm">2009-07-02 09:45:30.64</span><span style="left:150px">19.47</span><span style="left:210px">82.83</span><span style="left:270px">0.13</span><span style="left:330px">82.96</span></div>
<div class="row" style="top:514px;height:14px;overflow:hidden;"><span class="tm">2009-07-02 09:45:30.68</span><span style="left:150px">19.77</span><span style="left:210px">83.05</span><span style="left:270px">0.13</span><span style="left:330px">83.18</span></div>
<div class="row" style="top:528px;height:14px;overflow:hidden;"><span class="tm">2009-07-02 09:45:30.72</span><span style="left:150px">20.06</span><span style="left:210px">83.26</span><span style="left:270px">0.16</span><span style="left:330px">83.42</span></div>
<div class="row" style="top:542px;height:14px;overflow:hidden;"><span class="tm">2009-07-02 09:45:30.76</span><span style="left:150px">20.32</span><span style="left:210px">83.45</span><span style="left:270px">0.15</span><span style="left:330px">83.60</span></div>
<div class="row" style="top:556px;height:14px;overflow:hidden;"><span class="tm">2009-07-02 09:45:30.81</span><span style="left:150px">20.65</span><span style="left:210px">83.68</span><span style="left:270px">0.15</span><span style="left:330px">83.82</span></div>
<div class="row" style="top:570px;height:14px;overflow:hidden;"><span class="tm">2009-07-02 09:45:30.85</span><span style="left:150px">21.37</span><span style="left:210px">84.18</span><span style="left:270px">0.15</span><span style="left:330px">84.32</span></div>
<div class="row" style="top:584px;height:14px;overflow:hidden;"><span class="tm">2009-07-02 09:45:30.89</span><span style="left:150px">22.09</span><span style="left:210px">84.65</span><span style="left:270px">0.11</span><span style="left:330px">84.76</span></div>
<div class="row" style="top:598px;height:14px;overflow:hidden;"><span class="tm">2009-07-02 09:45:30.93</span><span style="left:150px">22.27</span><span style="left:210px">84.77</span><span style="left:270px">0.14</span><span style="left:330px">84.91</span></div>
<div class="row" style="top:612px;height:14px;overflow:hidden;"><span class="tm">2009-07-02 09:45:31.&nbsp;0</span><span style="left:150px">22.15</span><span style="left:210px">84.70</span><span style="left:270px">0.13</span><span style="left:330px">84.82</span></div>
<div class="row" style="top:626px;height:14px;overflow:hidden;"><span class="tm">2009-07-02 09:45:31.&nbsp;4</span><span style="left:150px">22.10</span><span style="left:210px">84.66</span><span style="left:270px">0.12</span><span style="left:330px">84.78</span></div>
<div class="row" style="top:640px;height:14px;overflow:hidden;"><span class="tm">2009-07-02 09:45:31.&nbsp;8</span><span style="left:150px">21.94</span><span style="left:210px">84.55</span><span style="left:270px">0.12</span><span style="left:330px">84.68</span></div>
<div class="row" style="top:654px;height:14px;overflow:hidden;"><span class="tm">2009-07-02 09:45:31.12</span><span style="left:150px">22.00</span><span style="left:210px">84.59</span><span style="left:270px">0.11</span><span style="left:330px">84.71</span></div>
<div class="row" style="top:668px;height:14px;overflow:hidden;"><span class="tm">2009-07-02 09:45:31.17</span><span style="left:150px">22.53</span><span style="left:210px">84.94</span><span style="left:270px">0.10</span><span style="left:330px">85.04</span></div>
<div class="row" style="top:682px;height:14px;overflow:hidden;"><span class="tm">2009-07-02 09:45:31.21</span><span style="left:150px">22.62</span><span style="left:210px">85.00</span><span style="left:270px">0.11</span><span style="left:330px">85.11</span></div>
<div class="row" style="top:696px;height:14px;overflow:hidden;"><span class="tm">2009-07-02 09:45:31.25</span><span style="left:150px">23.40</span><span style="left:210px">85.49</span><span style="left:270px">0.13</span><span style="left:330px">85.61</span></div>
<div class="row" style="top:710px;height:12px;overflow:hidden;"><span class="tm">2009-07-02 09:45:31.29</span><span style="left:150px">23.68</span><span style="left:210px">85.66</span><span style="left:270px">0.12</span><span style="left:330px">85.78</span></div>
<div class="a" style="left:1027px;top:75px;width:16px;height:647px;background:#eae8e4;background-image:linear-gradient(45deg,#d4d0c8 25%,transparent 25%,transparent 75%,#d4d0c8 75%),linear-gradient(45deg,#d4d0c8 25%,#fff 25%,#fff 75%,#d4d0c8 75%);background-size:2px 2px;background-position:0 0,1px 1px;"></div>
<div class="sb" style="left:1027px;top:75px;width:16px;height:16px;"><i></i></div>
<div class="sb" style="left:1027px;top:91px;width:16px;height:78px;"><i></i></div>
<div class="sb" style="left:1027px;top:706px;width:16px;height:16px;"><i></i></div>
<svg class="a" style="left:1031px;top:80px" width="8" height="5" viewBox="0 0 8 5"><path d="M0 4.500h7L3.500 .5z" fill="#000"/></svg>
<svg class="a" style="left:1031px;top:712px" width="8" height="5" viewBox="0 0 8 5"><path d="M0 .5h7L3.500 4.500z" fill="#000"/></svg>
</body></html>
